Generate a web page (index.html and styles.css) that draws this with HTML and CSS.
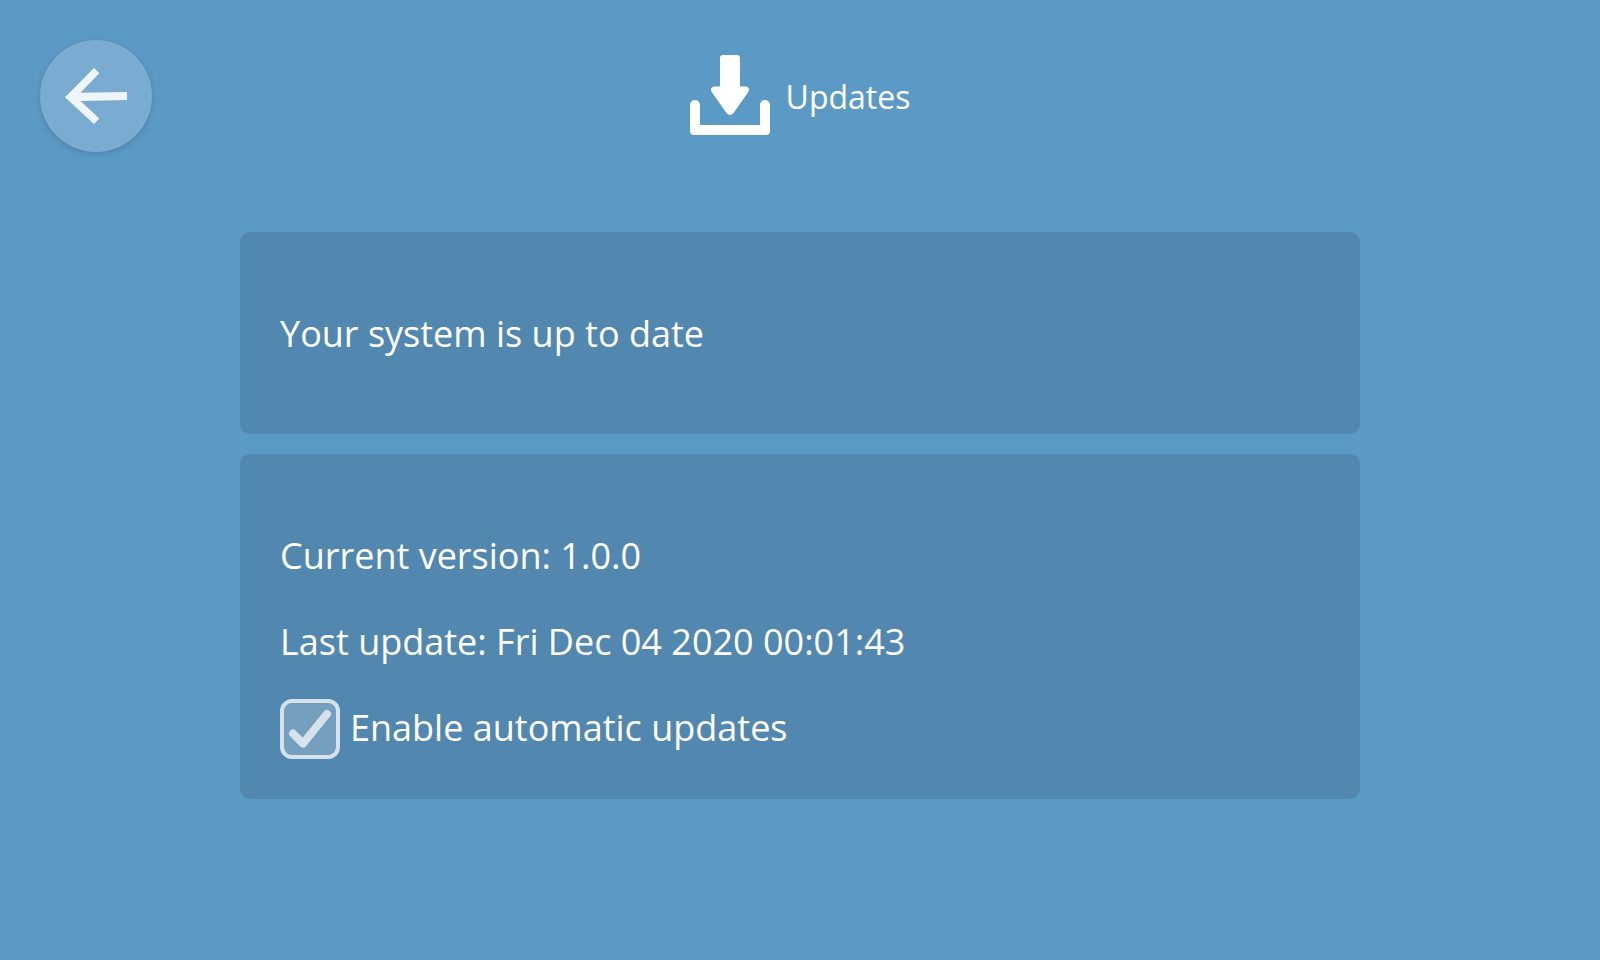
FILE: index.html
```html
<!DOCTYPE html>
<html lang="en">
<head>
<meta charset="utf-8">
<meta name="viewport" content="width=device-width, initial-scale=1">
<title>Updates</title>
<link rel="stylesheet" href="styles.css">
</head>
<body>
<header class="header">
  <button class="back" type="button" aria-label="Back">
    <svg class="back-icon" viewBox="0 0 112 112" aria-hidden="true"><path d="M25 57.3 54 28 59.3 33.3 40.5 52.7 87 52V60L40.5 61 59.3 78.5 54 84Z"/></svg>
  </button>
  <h1 class="title">
    <svg class="title-icon" viewBox="0 0 80 80" aria-hidden="true">
      <path d="M33 0H47Q50 0 50 3V31.5H56Q60.500 32.500 58.300 37L43.500 58Q40 62 36.500 58L21.700 37Q19.500 32.500 24 31.500H30V3Q30 0 33 0Z"/>
      <path d="M0 50A5 5 0 0 1 10 50V70H70V50A5 5 0 0 1 80 50V76Q80 80 76 80H4Q0 80 0 76Z"/>
    </svg>
    <span class="title-text">Updates</span>
  </h1>
</header>
<main class="content">
  <section class="card">
    <p class="line">Your system is up to date</p>
  </section>
  <section class="card card-details">
    <p class="line">Current version: 1.0.0</p>
    <p class="line">Last update: Fri Dec 04 2020 00:01:43</p>
    <div class="option">
      <span class="check">
        <input class="check-input" type="checkbox" id="auto-updates" checked>
        <svg class="check-mark" viewBox="0 0 60 60" aria-hidden="true"><path d="M13 34.500 23 44.600 47 15"/></svg>
      </span>
      <label class="option-label" for="auto-updates">Enable automatic updates</label>
    </div>
  </section>
</main>
</body>
</html>
```
FILE: styles.css
```css
* {
  box-sizing: border-box;
}

body {
  margin: 0;
  min-height: 100vh;
  background: #5c9ac6;
  color: #fff;
  font-family: "Open Sans", "Noto Sans", sans-serif;
  font-size: 36px;
  line-height: 50px;
}

.header {
  display: grid;
  grid-template-columns: 1fr auto 1fr;
  align-items: center;
  padding: 40px;
}

.back {
  width: 112px;
  height: 112px;
  padding: 0;
  border: 0;
  border-radius: 50%;
  background: rgba(255, 255, 255, 0.18);
  box-shadow: 0 2px 6px rgba(0, 0, 0, 0.16);
  cursor: pointer;
}

.back-icon {
  display: block;
  width: 100%;
  fill: #eff5fa;
}

.title {
  display: flex;
  align-items: center;
  gap: 16px;
  margin: 0;
  font-size: 32px;
  font-weight: 400;
}

.title-icon {
  width: 80px;
  height: 80px;
  margin-bottom: 2px;
  fill: #fff;
}

.title-text {
  padding-top: 2px;
}

.content {
  display: flex;
  flex-direction: column;
  gap: 20px;
  width: 70%;
  margin: 40px auto;
}

.card {
  padding: 77px 40px 75px;
  border-radius: 10px;
  background: #5287af;
}

.card-details {
  padding-bottom: 40px;
}

.line {
  margin: 0;
}

.line + .line {
  margin-top: 36px;
}

.option {
  display: flex;
  align-items: center;
  gap: 10px;
  margin-top: 32px;
}

.option-label {
  padding-bottom: 2px;
}

.check {
  display: grid;
}

.check-input,
.check-mark {
  grid-area: 1 / 1;
  width: 60px;
  height: 60px;
}

.check-input {
  appearance: none;
  margin: 0;
  border: 4px solid rgba(255, 255, 255, 0.7);
  border-radius: 12px;
  background: rgba(255, 255, 255, 0.2);
  cursor: pointer;
}

.check-mark {
  visibility: hidden;
  pointer-events: none;
  fill: none;
  stroke: #d6e2ec;
  stroke-width: 8;
  stroke-linecap: round;
  stroke-linejoin: round;
}

.check-input:checked + .check-mark {
  visibility: visible;
}
```
